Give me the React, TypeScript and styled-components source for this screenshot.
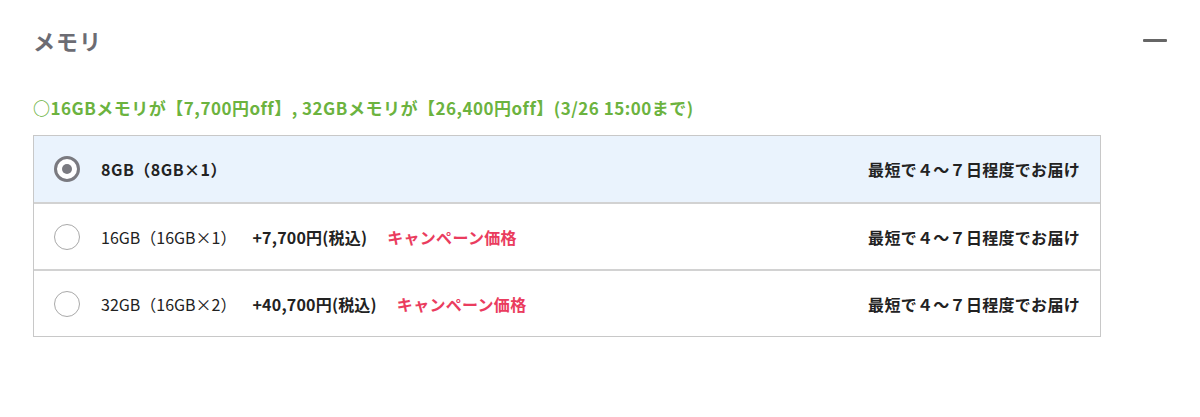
import React from "react";
import styled, { createGlobalStyle } from "styled-components";

const Global = createGlobalStyle`
  html, body { margin: 0; padding: 0; background: #fff; }
  body { font-family: "Noto Sans CJK JP", "Noto Sans", sans-serif; color: #222; }
`;

const Page = styled.div`
  padding: 22px 33px 0 33px;
  width: 1200px;
  box-sizing: border-box;
`;

const Header = styled.div`
  display: flex;
  align-items: center;
  justify-content: space-between;
  height: 36px;
`;

const Title = styled.h2`
  margin: 0;
  font-size: 22px;
  font-weight: 700;
  color: #6c6c73;
  letter-spacing: 1px;
`;

const Collapse = styled.span`
  display: block;
  width: 24px;
  height: 3px;
  background: #666;
  border-radius: 1px;
`;

const Notice = styled.p`
  margin: 37px 0 14px 0;
  font-size: 17px;
  font-weight: 700;
  color: #6cb33f;
  line-height: 26px;
  letter-spacing: 0.5px;
`;

const Table = styled.div`
  width: 1068px;
  border: 1px solid #c8c8c8;
  box-sizing: border-box;
`;

const Row = styled.label<{ $selected?: boolean; $first?: boolean }>`
  display: flex;
  align-items: center;
  height: ${(p) => (p.$first ? "66px" : "67px")};
  padding: 0 20px;
  background: ${(p) => (p.$selected ? "#eaf3fd" : "#fff")};
  border-top: ${(p) => (p.$first ? "none" : "2px solid #d2d2d2")};
  box-sizing: border-box;
  cursor: pointer;
`;

const Radio = styled.span<{ $checked?: boolean }>`
  flex: none;
  width: 26px;
  height: 26px;
  border-radius: 50%;
  box-sizing: border-box;
  border: ${(p) => (p.$checked ? "3px solid #7a7a80" : "1px solid #a9a9a9")};
  background: #fff;
  display: flex;
  align-items: center;
  justify-content: center;
  margin-right: 21px;
  &::after {
    content: "";
    display: ${(p) => (p.$checked ? "block" : "none")};
    width: 10px;
    height: 10px;
    border-radius: 50%;
    background: #7a7a80;
  }
`;

const Label = styled.span<{ $bold?: boolean }>`
  font-size: 16px;
  font-weight: ${(p) => (p.$bold ? 700 : 400)};
  color: #222;
  letter-spacing: ${(p) => (p.$bold ? "0.5px" : "0")};
`;

const Price = styled.span`
  font-size: 16px;
  font-weight: 700;
  color: #222;
  margin-left: 16px;
  letter-spacing: 0.2px;
`;

const Campaign = styled.span`
  font-size: 16px;
  font-weight: 700;
  color: #ea3c5e;
  margin-left: 20px;
  letter-spacing: 0.3px;
`;

const Delivery = styled.span`
  margin-left: auto;
  font-size: 16px;
  font-weight: 700;
  color: #222;
  letter-spacing: 0.3px;
`;

type Opt = { label: string; price?: string; selected?: boolean };

const options: Opt[] = [
  { label: "8GB（8GB×1）", selected: true },
  { label: "16GB（16GB×1）", price: "+7,700円(税込)" },
  { label: "32GB（16GB×2）", price: "+40,700円(税込)" },
];

export default function App() {
  return (
    <>
      <Global />
      <Page>
        <Header>
          <Title>メモリ</Title>
          <Collapse />
        </Header>
        <Notice>
          ○16GBメモリが【7,700円off】, 32GBメモリが【26,400円off】(3/26 15:00まで)
        </Notice>
        <Table>
          {options.map((o, i) => (
            <Row key={o.label} $selected={o.selected} $first={i === 0}>
              <Radio $checked={o.selected} />
              <Label $bold={o.selected}>{o.label}</Label>
              {o.price && <Price>{o.price}</Price>}
              {o.price && <Campaign>キャンペーン価格</Campaign>}
              <Delivery>最短で４～７日程度でお届け</Delivery>
            </Row>
          ))}
        </Table>
      </Page>
    </>
  );
}
